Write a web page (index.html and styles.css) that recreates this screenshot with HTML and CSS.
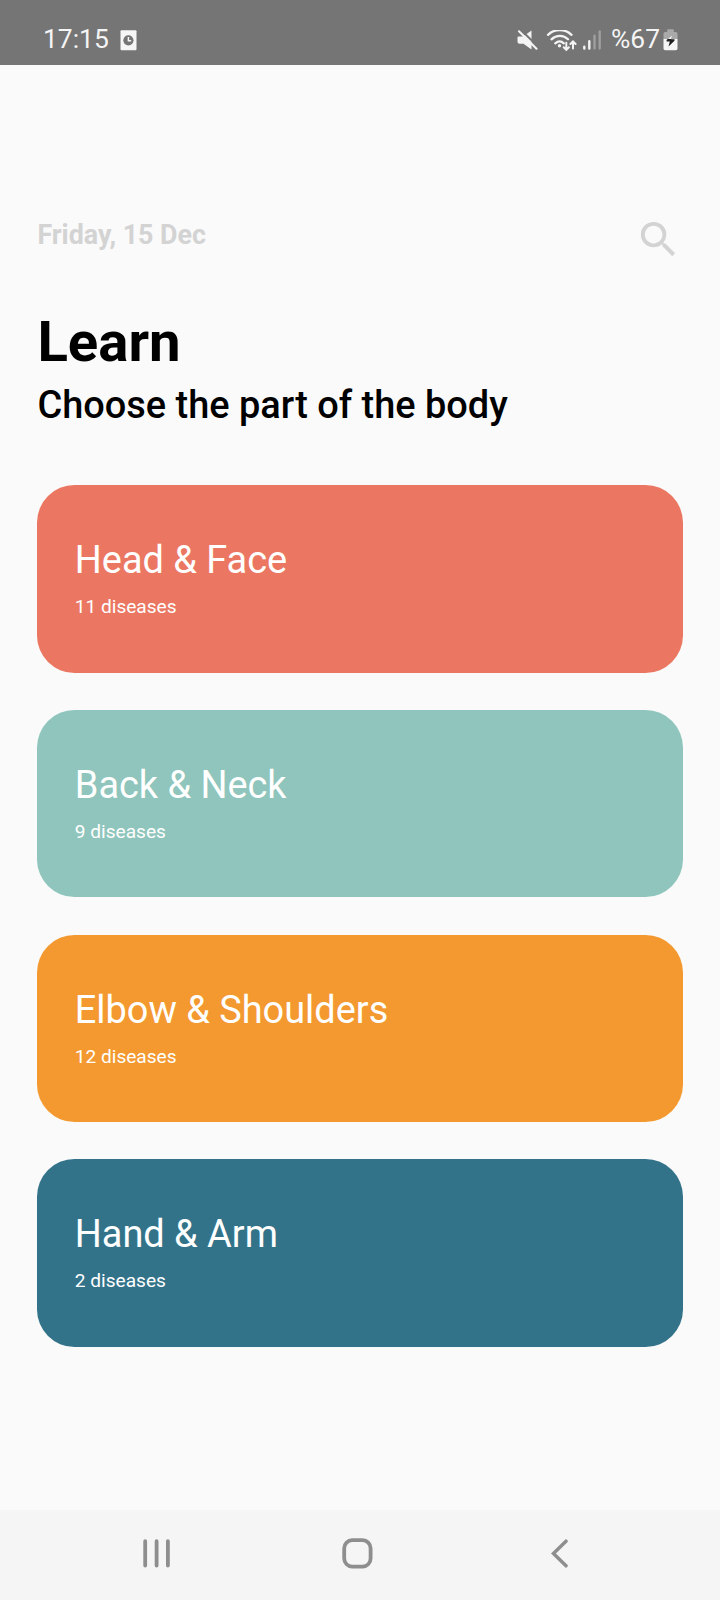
FILE: index.html
```html
<!DOCTYPE html>
<html lang="en">
<head>
<meta charset="utf-8">
<title>Learn</title>
<link rel="stylesheet" href="styles.css">
</head>
<body>
<header class="status">
  <div class="status-left">
    <span class="time">17:15</span>
    <svg class="clock" width="17" height="21" viewBox="0 0 17 21"><rect x=".5" y=".3" width="16" height="20" rx="1" fill="#f6f6f6"/><circle cx="8.4" cy="10.3" r="5.1" fill="#757575"/><path d="M8.4 7v3.8h2.8" fill="none" stroke="#f6f6f6" stroke-width="1.5"/></svg>
  </div>
  <div class="status-right">
    <svg class="signals" width="84" height="24" viewBox="0 0 84 24" fill="none" stroke="#f4f4f4" stroke-linecap="round">
      <path d="M1.500 6.500h4.500L14.500.5v19L6.500 13.800H2.500a2 2 0 0 1-2-2V7.500a1 1 0 0 1 1-1z" fill="#f4f4f4" stroke="none"/>
      <path d="M3.500-.5 21.500 17" stroke="#757575" stroke-width="2"/>
      <path d="M2 1.300 19.500 18.700" stroke-width="2.100"/>
      <g stroke-width="2.300"><path d="M31 4.800c6.500-6.300 17-6.300 23.500 0M34.500 9.300c4.800-4.600 12-4.600 16.500 0M38.300 13.300c2.700-2.400 6-2.400 8.500 0"/></g>
      <circle cx="42.500" cy="15.800" r="1.700" fill="#f4f4f4" stroke="none"/>
      <path d="M49.300 12.800v6.700M46.700 17.200l2.600 2.600 2.600-2.600M56 18.500v-6.500M53.400 14l2.600-2.600 2.600 2.600" stroke-width="2"/>
      <path d="M67.300 16.700v1.800M72.300 11.200v7.300" stroke-width="2.400"/>
      <path d="M77.500 5.700v12.800M82.700 1.300v17.200" stroke="#a0a0a0" stroke-width="2.300"/>
    </svg>
    <span class="percent">%67</span>
    <svg class="battery" width="15" height="22" viewBox="0 0 15 22"><path d="M4.200 3V1q0-.8.8-.8h5q.8 0 .8.8v2h2q1.700 0 1.700 1.700V10H.5V4.700Q.5 3 2.200 3z" fill="#a9a9a9"/><path d="M.5 10h14v9.500q0 1.800-1.800 1.800H2.300Q.5 21.300.5 19.500z" fill="#f6f6f6"/><path d="M9.200 6 3.600 11v1.500h3.200L5.500 17.500l6-5.700v-1.500H8.300z" fill="#202020"/><path d="M9.200 6 4.700 10h3.700z" fill="#f6f6f6"/></svg>
  </div>
</header>
<main class="page">
  <div class="top-row">
    <span class="date">Friday, 15 Dec</span>
    <svg class="search" viewBox="0 0 24 24"><path d="M15.500 14h-.79l-.28-.27A6.471 6.471 0 0 0 16 9.500 6.500 6.500 0 1 0 9.500 16c1.610 0 3.090-.59 4.230-1.570l.27.28v.79l5 4.990L20.490 19l-4.990-5zm-6 0C7.010 14 5 11.990 5 9.500S7.010 5 9.500 5 14 7.010 14 9.500 11.990 14 9.500 14z"/></svg>
  </div>
  <h1 class="title">Learn</h1>
  <p class="subtitle">Choose the part of the body</p>
  <div class="cards">
    <section class="card coral"><h2 class="card-title">Head &amp; Face</h2><p class="count">11 diseases</p></section>
    <section class="card mint"><h2 class="card-title">Back &amp; Neck</h2><p class="count">9 diseases</p></section>
    <section class="card orange"><h2 class="card-title">Elbow &amp; Shoulders</h2><p class="count">12 diseases</p></section>
    <section class="card blue"><h2 class="card-title">Hand &amp; Arm</h2><p class="count">2 diseases</p></section>
  </div>
</main>
<nav class="nav">
  <svg width="27" height="29" viewBox="0 0 27 29" fill="none" stroke="#8e8e8e" stroke-width="3.800" stroke-linecap="round"><path d="M2.200 2.200v24.400M13.600 2.200v24.400M24.900 2.200v24.400"/></svg>
  <svg class="home" width="31" height="31" viewBox="0 0 31 31" fill="none" stroke="#8e8e8e" stroke-width="3.800"><rect x="2.200" y="2.200" width="26.400" height="26.400" rx="8"/></svg>
  <svg width="18" height="29" viewBox="0 0 18 29" fill="none" stroke="#8e8e8e" stroke-width="3.500" stroke-linecap="round"><path d="M15 2.200 2.400 14.500 15 26.800"/></svg>
</nav>
</body>
</html>
```
FILE: styles.css
```css
* { box-sizing: border-box; }
body {
  margin: 0;
  height: 1600px;
  display: flex;
  flex-direction: column;
  background: #fafafa;
  color: #000;
  font-family: Roboto, "Liberation Sans", sans-serif;
}
h1, h2, p { margin: 0; }
svg { display: block; flex: none; }
.status {
  height: 65px;
  padding: 14px 42px 0 43px;
  display: flex;
  justify-content: space-between;
  background: #757575;
  color: #f4f4f4;
  font-size: 26.400px;
  line-height: 51px;
}
.status-left, .status-right { display: flex; align-items: flex-start; height: 50px; }
.clock { margin: 16px 0 0 11px; }
.signals { margin-top: 16px; }
.percent { margin-left: 10px; }
.battery { margin: 15px 0 0 3px; }
.page { flex: 1; padding: 151px 37.400px 0; }
.top-row { display: flex; justify-content: space-between; height: 93px; }
.date {
  padding-top: 4px;
  color: #d3d3d3;
  font-size: 26.800px;
  font-weight: 700;
  line-height: 31px;
}
.search { width: 47px; height: 47px; margin-right: 0.600px; fill: #d3d3d3; }
.title { font-size: 56.300px; font-weight: 700; line-height: 66px; }
.subtitle { margin-top: 8px; font-size: 37.950px; font-weight: 500; line-height: 45px; }
.cards { display: grid; gap: 37.200px; margin-top: 57px; padding-top: 0.300px; }
.card {
  height: 187.500px;
  padding: 53px 37.400px 0;
  border-radius: 37.500px;
  color: #fff;
}
.coral { background: #eb7762; }
.mint { background: #8fc5bc; }
.orange { background: #f3992f; }
.blue { background: #33738a; }
.card-title { font-size: 37.900px; font-weight: 400; line-height: 44px; }
.count { margin-top: 14px; font-size: 19.100px; line-height: 22px; }
.nav {
  height: 90px;
  padding: 0 151.500px 4px 143px;
  display: flex;
  align-items: center;
  justify-content: space-between;
  background: #f5f5f5;
}
.home { margin-right: 5px; }
```
